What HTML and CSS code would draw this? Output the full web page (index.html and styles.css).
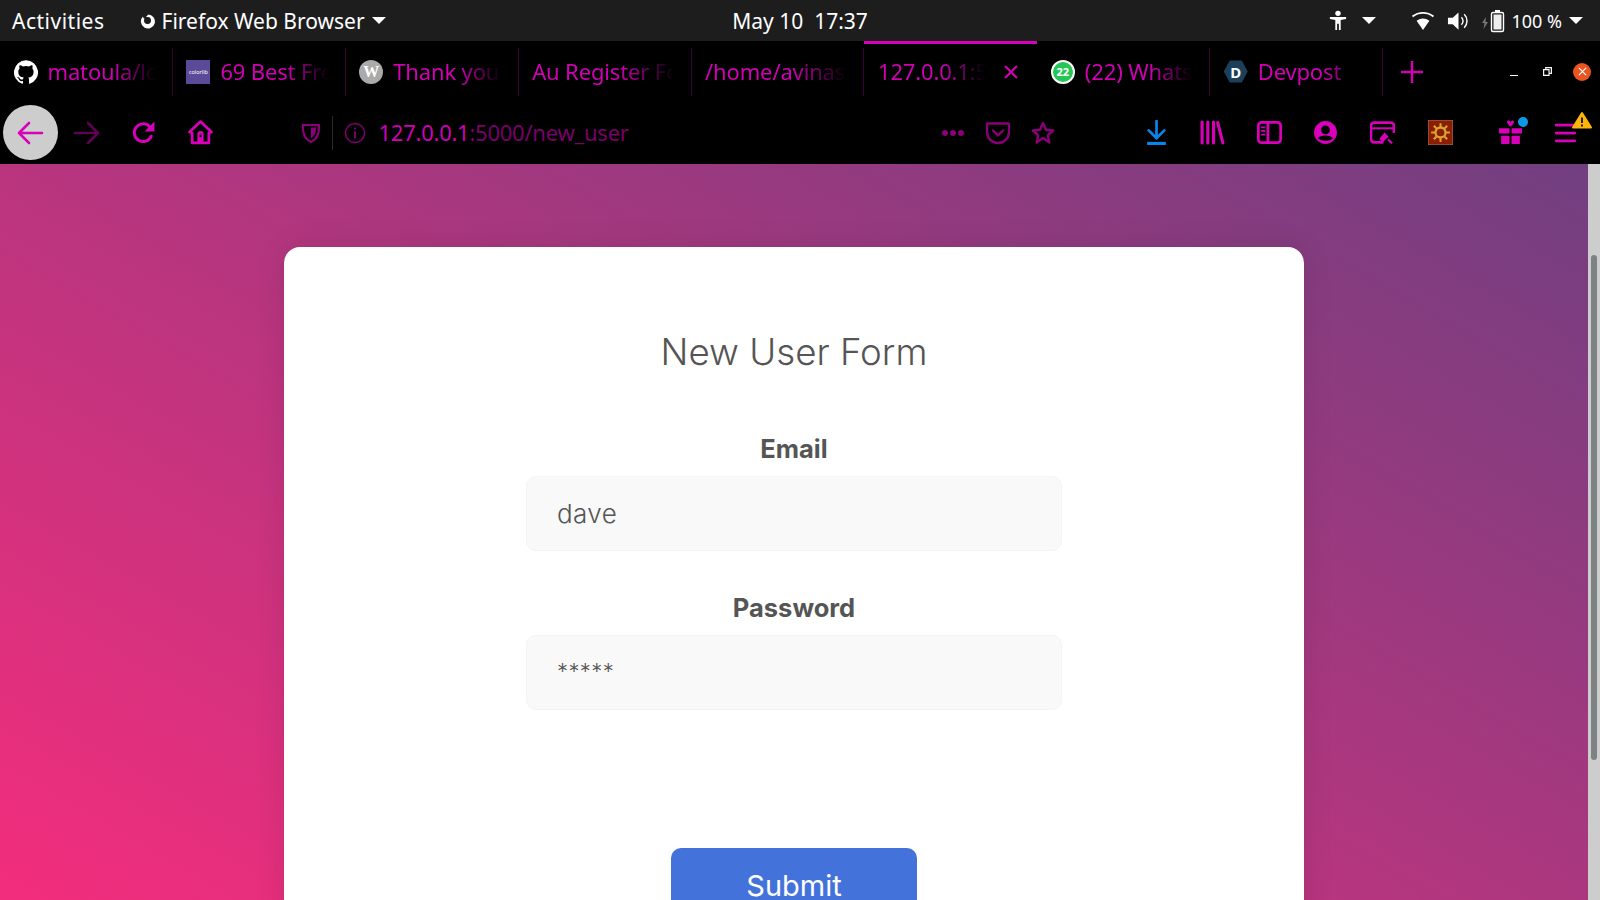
FILE: index.html
```html
<!DOCTYPE html>
<html lang="en">
<head>
  <meta charset="UTF-8" />
  <title>New User Form</title>
  <link rel="stylesheet" href="styles.css">
</head>
<body>

  <!-- Desktop top bar -->
  <header class="topbar">
    <div class="topbar-left">
      <span class="activities">Activities</span>
      <span class="app-menu">
        <svg class="ff-mark" viewBox="0 0 16 16"><path fill="#fff" d="M8 1.500c-.4 1-1 1.500-2 2l1 .5a3.500 3.500 0 1 1-3 3.500c0-.7.2-1.300.5-1.800C3.500 5.200 3 4.500 3 3.500A7 7 0 1 0 8 1.500z"/></svg>
        Firefox Web Browser
        <i class="caret"></i>
      </span>
    </div>
    <div class="clock">May 10&nbsp; 17:37</div>
    <div class="topbar-right">
      <svg class="tray-a11y" viewBox="0 0 20 24"><circle cx="10" cy="3.500" r="3" fill="#fff"/><path fill="#fff" d="M1 7.500h18v2.400l-6 1.100V22h-2v-7H9v7H7V11L1 9.900z"/></svg>
      <i class="caret caret-a11y"></i>
      <svg class="tray-wifi" viewBox="0 0 24 20"><path fill="#fff" d="M12 19 5.600 9.800a11 11 0 0 1 12.800 0z"/><path fill="none" stroke="#fff" stroke-width="1.800" d="M1.500 5.500a17 17 0 0 1 21 0"/></svg>
      <svg class="tray-vol" viewBox="0 0 24 20"><path fill="#fff" d="M1 6.500h5L12 1v18l-6-5.500H1z"/><path fill="none" stroke="#fff" stroke-width="1.500" d="M15 6a5.500 5.500 0 0 1 0 8M18 3a10 10 0 0 1 0 14"/></svg>
      <svg class="tray-bat" viewBox="0 0 24 24"><path fill="#777" d="M4 8 0 14h2.500L1.500 20 6 13H3.500z"/><rect x="9.500" y="3.500" width="12" height="19" rx="1.500" fill="none" stroke="#fff" stroke-width="1.400"/><rect x="13" y="1" width="5" height="2" fill="#fff"/><rect x="11.500" y="5.500" width="8" height="15" fill="#eee"/></svg>
      <span class="battery">100 %</span>
      <i class="caret"></i>
    </div>
  </header>

  <!-- Tab strip -->
  <nav class="tabs">
    <div class="tab">
      <svg class="favicon" viewBox="0 0 24 24"><path fill="#fff" d="M12 .3a12 12 0 0 0-3.800 23.400c.6.100.8-.3.8-.6v-2c-3.300.7-4-1.600-4-1.600-.6-1.400-1.400-1.800-1.400-1.800-1-.7.100-.7.100-.7 1.200 0 1.900 1.200 1.900 1.200 1 1.800 2.800 1.300 3.500 1 0-.8.4-1.300.7-1.600-2.700-.3-5.500-1.300-5.500-6 0-1.200.5-2.300 1.300-3.100-.2-.4-.6-1.600 0-3.200 0 0 1-.3 3.400 1.200a11.500 11.500 0 0 1 6 0c2.300-1.500 3.300-1.200 3.300-1.200.6 1.600.2 2.800 0 3.200.9.800 1.300 1.900 1.300 3.200 0 4.600-2.800 5.600-5.500 5.900.5.400.9 1 .9 2.200v3.300c0 .3.100.7.8.6A12 12 0 0 0 12 .3"/></svg>
      <span class="tab-title">matoula/login</span>
    </div>
    <div class="tab">
      <span class="favicon fav-colorlib">colorlib</span>
      <span class="tab-title">69 Best Free</span>
    </div>
    <div class="tab">
      <span class="favicon fav-wp">W</span>
      <span class="tab-title">Thank you for</span>
    </div>
    <div class="tab">
      <span class="tab-title">Au Register Form</span>
    </div>
    <div class="tab">
      <span class="tab-title">/home/avinash</span>
    </div>
    <div class="tab tab-active">
      <span class="tab-title">127.0.0.1:5000</span>
      <svg class="tab-close" viewBox="0 0 16 16"><path stroke="#d800b8" stroke-width="2" d="M2 2l12 12M14 2 2 14"/></svg>
    </div>
    <div class="tab">
      <span class="favicon fav-wa">22</span>
      <span class="tab-title">(22) WhatsApp</span>
    </div>
    <div class="tab">
      <span class="favicon fav-dev">D</span>
      <span class="tab-title">Devpost</span>
    </div>
    <svg class="new-tab" viewBox="0 0 22 22"><path stroke="#d000b4" stroke-width="2.500" d="M11 0v22M0 11h22"/></svg>
    <div class="window-btns">
      <i class="win-min"></i>
      <svg class="win-max" viewBox="0 0 10 10"><path fill="none" stroke="#fff" stroke-width="1.300" d="M.7 3h6v6.300h-6zM3 3V.7h6.300V7H7"/></svg>
      <span class="win-close"><svg viewBox="0 0 10 10"><path stroke="#fff" stroke-width="1.400" d="M1 1l8 8M9 1 1 9"/></svg></span>
    </div>
  </nav>

  <!-- Toolbar -->
  <div class="toolbar">
    <div class="nav-btns">
      <span class="tool-btn back-btn">
        <svg viewBox="0 0 28 28" class="ico"><path fill="none" stroke="#d800b8" stroke-width="2.600" stroke-linecap="round" stroke-linejoin="round" d="M25 14H2M12 4 2 14l10 10"/></svg>
      </span>
      <span class="tool-btn faded">
        <svg viewBox="0 0 28 28" class="ico"><path fill="none" stroke="#d800b8" stroke-width="2.600" stroke-linecap="round" stroke-linejoin="round" d="M2 14h23M15 4l10 10-10 10"/></svg>
      </span>
      <span class="tool-btn">
        <svg viewBox="0 0 24 24" class="ico"><path fill="none" stroke="#d800b8" stroke-width="2.800" stroke-linecap="round" d="M19.500 15.500a8.500 8.500 0 1 1-1.500-9"/><path fill="#d800b8" d="M22.500 1.500v9.500H13z"/></svg>
      </span>
      <span class="tool-btn">
        <svg viewBox="0 0 24 24" class="ico"><path fill="none" stroke="#d800b8" stroke-width="2.600" stroke-linejoin="round" d="M1.500 11.500 12 1.500l10.500 10-2.500 1V22H4v-9.500z"/><path fill="#d800b8" d="M9 13.500a3 3 0 0 1 6 0V22H9z"/><path fill="#000" d="M11 14h2v2.500h-2z"/></svg>
      </span>
    </div>

    <div class="urlbar">
      <svg viewBox="0 0 20 22" class="url-shield"><path fill="none" stroke="#8a0078" stroke-width="2.200" d="M2 3h16c.5 8-1 14-8 17C3 17 1.500 11 2 3z"/><path fill="#8a0078" d="M10 5.500h5c0 5-1 8-5 11z"/></svg>
      <span class="url-sep"></span>
      <svg viewBox="0 0 22 22" class="url-info"><circle cx="11" cy="11" r="9.500" fill="none" stroke="#7a006a" stroke-width="1.600"/><path stroke="#7a006a" stroke-width="2" d="M11 9.500v7M11 5.500v2"/></svg>
      <span class="url-text"><span class="url-host">127.0.0.1</span>:5000/new_user</span>
      <span class="url-more"><i></i><i></i><i></i></span>
      <svg viewBox="0 0 24 24" class="url-pocket"><path fill="none" stroke="#8a0078" stroke-width="2.400" stroke-linejoin="round" d="M2 2.500h20a1 1 0 0 1 1 1V11a11 11 0 0 1-22 0V3.500a1 1 0 0 1 1-1z"/><path fill="none" stroke="#8a0078" stroke-width="2.400" stroke-linecap="round" stroke-linejoin="round" d="m7 9.500 5 5 5-5"/></svg>
      <svg viewBox="0 0 24 24" class="url-star"><path fill="none" stroke="#8a0078" stroke-width="2.400" stroke-linejoin="round" d="m12 2 3 6.700 7.200.8-5.400 4.800 1.500 7.200L12 17l-6.300 4.500 1.500-7.200L1.800 9.500 9 8.700z"/></svg>
    </div>

    <div class="tools-right">
      <span class="tool-btn">
        <svg viewBox="0 0 24 24" class="ico"><path fill="none" stroke="#0a84e8" stroke-width="2.600" stroke-linecap="round" stroke-linejoin="round" d="M12 1v15M4.500 10l7.500 7.500 7.500-7.500"/><path stroke="#0a84e8" stroke-width="3" d="M3 22.500h18"/></svg>
      </span>
      <span class="tool-btn">
        <svg viewBox="0 0 24 24" class="ico"><path stroke="#d800b8" stroke-width="3" stroke-linecap="round" d="M2 2v20M7.500 2v20M13 2v20M17 2.500l5 19.500"/></svg>
      </span>
      <span class="tool-btn">
        <svg viewBox="0 0 24 24" class="ico"><rect x="1.300" y="2.300" width="21.400" height="19.400" rx="3" fill="none" stroke="#d800b8" stroke-width="2.600"/><path stroke="#d800b8" stroke-width="2.600" d="M10.500 2.500v19"/><path stroke="#d800b8" stroke-width="1.600" d="M4 7h4M4 10.500h4M4 14h4"/></svg>
      </span>
      <span class="tool-btn">
        <svg viewBox="0 0 24 24" class="ico"><circle cx="12" cy="12" r="11" fill="#d800b8"/><circle cx="12" cy="9.500" r="4.200" fill="#000"/><path fill="#000" d="M4.500 17.500c3.500-3.500 11.500-3.500 15 0-3.500 3.200-11.500 3.200-15 0z"/></svg>
      </span>
      <span class="tool-btn">
        <svg viewBox="0 0 24 24" class="ico"><path fill="none" stroke="#d800b8" stroke-width="2.500" d="M13 21.500H4a3 3 0 0 1-3-3v-13a3 3 0 0 1 3-3h16a3 3 0 0 1 3 3v7"/><path stroke="#d800b8" stroke-width="2" d="M1 8h22"/><path fill="#d800b8" d="m14 12 4 4-6 5-3-3zM18 18l4 3.500-1.500 1.500-4-3.500z"/></svg>
      </span>
      <span class="tool-btn tool-sun">
        <svg viewBox="0 0 24 24" class="ico"><rect width="24" height="24" fill="#8c1c02" stroke="#9a7a60"/><circle cx="12" cy="12" r="4.800" fill="none" stroke="#d9a532" stroke-width="2.200"/><path stroke="#d9a532" stroke-width="2" d="M12 3v4M12 17v4M3 12h4M17 12h4M5.600 5.600l3 3M15.400 15.400l3 3M18.400 5.600l-3 3M8.600 15.400l-3 3"/></svg>
      </span>
      <span class="tool-btn tool-gift">
        <svg viewBox="0 0 24 24" class="ico"><path fill="#d800b8" d="M1 8h10v5H1zM13 8h10v5H13zM3 15h8v8H3zM13 15h8v8h-8z"/><path fill="#d800b8" d="M12 6.500C8 3 8 .5 10 .5c1 0 2 1 2 2 0-1 1-2 2-2 2 0 2 2.500-2 6z"/></svg>
        <i class="gift-dot"></i>
      </span>
      <span class="tool-btn tool-menu">
        <svg viewBox="0 0 24 24" class="ico"><path stroke="#d800b8" stroke-width="2.600" stroke-linecap="round" d="M2 5h18M2 12.500h18M2 20h18"/></svg>
        <svg viewBox="0 0 20 18" class="menu-warn"><path fill="#ffb40a" stroke="#ffb40a" stroke-width="2" stroke-linejoin="round" d="M10 2 19 16.500H1z"/><path stroke="#222" stroke-width="2" d="M10 6.500v5.500M10 13.500v2"/></svg>
      </span>
    </div>
  </div>

  <!-- Page content -->
  <div class="viewport">
    <main class="page">
      <section class="card">
        <h1>New User Form</h1>
        <form>
          <div class="field">
            <label for="email">Email</label>
            <input id="email" type="text" value="dave" />
          </div>
          <div class="field field-pw">
            <label for="password">Password</label>
            <input id="password" type="text" value="*****" />
          </div>
          <button type="button" class="submit-btn">Submit</button>
        </form>
      </section>
    </main>
    <div class="scrollbar"><div class="scroll-thumb"></div></div>
  </div>

</body>
</html>
```

FILE: styles.css
```css
/* Reset */
* {
  margin: 0;
  padding: 0;
  box-sizing: border-box;
}

:root {
  --magenta: #d000b4;
  --ui-font: 'Noto Sans', sans-serif;
  --page-font: 'Inter', sans-serif;
}

html, body {
  height: 100%;
  overflow: hidden;
  font-family: var(--ui-font);
  background: #000;
}

body {
  display: flex;
  flex-direction: column;
  height: 100vh;
}

/* Desktop top bar */
.topbar {
  height: 41px;
  flex: none;
  background: #1d1d1d;
  color: #fff;
  font-size: 21px;
  display: grid;
  grid-template-columns: 1fr auto 1fr;
  align-items: center;
}

.topbar-left,
.topbar-right,
.app-menu {
  display: flex;
  align-items: center;
}

.activities {
  margin-left: 12px;
  letter-spacing: 0.5px;
}

.app-menu {
  margin-left: 35px;
}

.ff-mark {
  width: 16px;
  height: 16px;
  margin-right: 6px;
}

.caret {
  display: inline-block;
  width: 0;
  height: 0;
  border-left: 7px solid transparent;
  border-right: 7px solid transparent;
  border-top: 7px solid #fff;
  margin-left: 7px;
}

.topbar-right {
  justify-content: flex-end;
  padding-right: 17px;
}

.tray-a11y {
  width: 18px;
  height: 24px;
}

.caret-a11y {
  margin-left: 15px;
}

.tray-wifi {
  width: 24px;
  height: 20px;
  margin-left: 35px;
}

.tray-vol {
  width: 23px;
  height: 20px;
  margin-left: 12px;
}

.tray-bat {
  width: 24px;
  height: 24px;
  margin-left: 12px;
}

.battery {
  font-size: 18px;
  margin-left: 5px;
}

/* Tab strip */
.tabs {
  height: 61px;
  flex: none;
  display: flex;
  align-items: center;
  background: #000;
}

.tab {
  position: relative;
  width: 172.900px;
  height: 48px;
  flex: none;
  display: flex;
  align-items: center;
  padding-left: 13.500px;
  border-right: 1px solid #3d0036;
  color: var(--magenta);
  font-size: 22px;
}

.tab-title {
  flex: 1;
  min-width: 0;
  margin-right: 16px;
  padding-bottom: 2px;
  letter-spacing: -0.15px;
  white-space: nowrap;
  overflow: hidden;
  -webkit-mask-image: linear-gradient(to right, #000 60%, transparent);
  mask-image: linear-gradient(to right, #000 60%, transparent);
}

.tab-active {
  border-right: 0;
}

.tab-active::before {
  content: '';
  position: absolute;
  left: 0;
  right: 0;
  top: -7px;
  height: 3px;
  background: #d800b8;
}

.tab-active .tab-title {
  margin-right: 18px;
}

.tab-close {
  width: 16px;
  height: 16px;
  margin-right: 18px;
}

.favicon {
  width: 24px;
  height: 24px;
  flex: none;
  margin-right: 10px;
  display: flex;
  align-items: center;
  justify-content: center;
}

.fav-colorlib {
  background: #5a4a98;
  color: #fff;
  font-size: 5.500px;
}

.fav-wp {
  border-radius: 50%;
  background: #aaa;
  color: #fff;
  font: bold 16px 'Liberation Serif', serif;
}

.fav-wa {
  border-radius: 50%;
  background: #25c655;
  border: 2px solid #fff;
  color: #fff;
  font-size: 11px;
  font-weight: 700;
}

.fav-dev {
  background: #1c3f5a;
  clip-path: polygon(25% 4%, 75% 4%, 100% 50%, 75% 96%, 25% 96%, 0 50%);
  color: #fff;
  font-size: 15px;
  font-weight: 700;
}

.new-tab {
  width: 22px;
  height: 22px;
  margin-left: 18px;
}

.window-btns {
  margin-left: auto;
  display: flex;
  align-items: center;
  padding-right: 9px;
}

.win-min {
  width: 8px;
  height: 1px;
  background: #fff;
  margin-top: 7px;
}

.win-max {
  width: 9px;
  height: 9px;
  margin-left: 25px;
}

.win-close {
  width: 18px;
  height: 18px;
  margin-left: 21px;
  border-radius: 50%;
  background: #e95420;
  display: flex;
  align-items: center;
  justify-content: center;
}

.win-close svg {
  width: 9px;
  height: 9px;
}

/* Toolbar */
.toolbar {
  height: 62px;
  flex: none;
  display: flex;
  align-items: center;
  background: #000;
  padding: 0 5px 1px 3px;
}

.nav-btns,
.tools-right {
  display: flex;
  align-items: center;
}

.tool-btn {
  position: relative;
  width: 56.500px;
  height: 56px;
  flex: none;
  display: flex;
  align-items: center;
  justify-content: center;
}

.ico {
  width: 25px;
  height: 25px;
}

.back-btn {
  width: 55px;
  height: 55px;
  border-radius: 50%;
  background: #cdcdcd;
  margin-right: 1px;
}

.back-btn .ico,
.faded .ico {
  width: 28px;
  height: 28px;
}

.faded {
  opacity: 0.45;
}

.urlbar {
  flex: 1;
  display: flex;
  align-items: center;
  height: 48px;
  padding-left: 72px;
}

.url-shield {
  width: 20px;
  height: 22px;
}

.url-sep {
  width: 1px;
  height: 34px;
  background: #2c2c2c;
  margin: 0 11px;
}

.url-info {
  width: 22px;
  height: 22px;
}

.url-text {
  margin-left: 13px;
  padding-bottom: 1px;
  font-size: 22px;
  letter-spacing: -0.25px;
  color: #7a006a;
}

.url-host {
  color: var(--magenta);
}

.url-more {
  margin-left: auto;
  display: flex;
  gap: 2px;
}

.url-more i {
  width: 6px;
  height: 6px;
  border-radius: 50%;
  background: #8a0078;
}

.url-pocket,
.url-star {
  width: 24px;
  height: 24px;
}

.url-pocket {
  margin-left: 22px;
}

.url-star {
  margin-left: 21px;
  margin-right: 73px;
}

.tool-sun {
  margin-left: 2px;
}

.tool-gift {
  margin-left: 13px;
}

.gift-dot {
  position: absolute;
  top: 12px;
  right: 11px;
  width: 10px;
  height: 10px;
  border-radius: 50%;
  background: #0a9ae8;
}

.menu-warn {
  position: absolute;
  top: 6px;
  right: 3px;
  width: 20px;
  height: 18px;
}

/* Page */
.viewport {
  flex: 1;
  min-height: 0;
  display: flex;
}

.page {
  flex: 1;
  min-width: 0;
  overflow: hidden;
  background: linear-gradient(30deg, #f32d7d, #713f80);
  padding-top: 83px;
  font-family: var(--page-font);
}

.card {
  width: 1020px;
  margin: 0 auto;
  height: 900px;
  padding-top: 78px;
  background: #fff;
  border-radius: 16px;
  box-shadow: 0 0 30px rgba(0, 0, 0, 0.1);
  color: #555;
  text-align: center;
}

h1 {
  font-size: 36.700px;
  line-height: 54px;
  font-weight: 300;
}

form {
  margin-top: 52px;
}

.field {
  margin-bottom: 39px;
}

.field label {
  display: block;
  font-size: 25.500px;
  line-height: 36px;
  font-weight: 700;
  margin-bottom: 9px;
}

.field input {
  display: block;
  width: 536px;
  height: 75px;
  margin: 0 auto;
  padding: 0 30px;
  background: #f9f9f9;
  border: 1px solid #f4f4f4;
  border-radius: 10px;
  font-family: var(--page-font);
  font-size: 26px;
  font-weight: 300;
  letter-spacing: 0.4px;
  color: #555;
  outline: none;
}

.field-pw input {
  font-size: 22px;
  padding-bottom: 3px;
}

.field-pw {
  margin-bottom: 138px;
}

.submit-btn {
  display: block;
  width: 246px;
  height: 75px;
  margin: 0 auto;
  border: 0;
  border-radius: 10px;
  background: #4472db;
  color: #fff;
  font-family: var(--page-font);
  font-size: 29px;
  font-weight: 400;
}

/* Scrollbar */
.scrollbar {
  width: 12px;
  flex: none;
  background: #cdcdcd;
  padding: 91px 3px 0;
}

.scroll-thumb {
  height: 505px;
  border-radius: 3px;
  background: #7d8282;
}
```
